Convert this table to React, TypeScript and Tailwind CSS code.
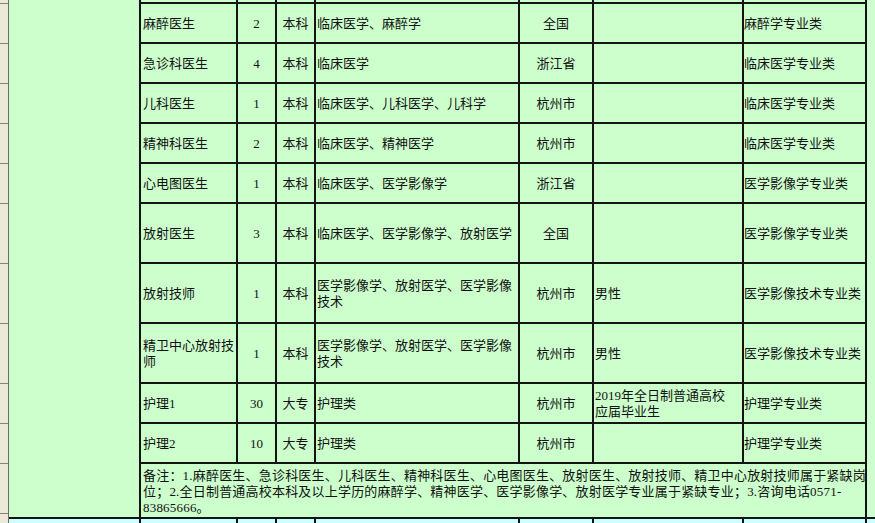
import React from "react";

type Row = {
  name: string[];
  count: string;
  degree: string;
  major: string[];
  region: string;
  other: string[];
  category: string;
};

const data: Row[] = [
  { name: ["麻醉医生"], count: "2", degree: "本科", major: ["临床医学、麻醉学"], region: "全国", other: [], category: "麻醉学专业类" },
  { name: ["急诊科医生"], count: "4", degree: "本科", major: ["临床医学"], region: "浙江省", other: [], category: "临床医学专业类" },
  { name: ["儿科医生"], count: "1", degree: "本科", major: ["临床医学、儿科医学、儿科学"], region: "杭州市", other: [], category: "临床医学专业类" },
  { name: ["精神科医生"], count: "2", degree: "本科", major: ["临床医学、精神医学"], region: "杭州市", other: [], category: "临床医学专业类" },
  { name: ["心电图医生"], count: "1", degree: "本科", major: ["临床医学、医学影像学"], region: "浙江省", other: [], category: "医学影像学专业类" },
  { name: ["放射医生"], count: "3", degree: "本科", major: ["临床医学、医学影像学、放射医学"], region: "全国", other: [], category: "医学影像学专业类" },
  { name: ["放射技师"], count: "1", degree: "本科", major: ["医学影像学、放射医学、医学影像", "技术"], region: "杭州市", other: ["男性"], category: "医学影像技术专业类" },
  { name: ["精卫中心放射技", "师"], count: "1", degree: "本科", major: ["医学影像学、放射医学、医学影像", "技术"], region: "杭州市", other: ["男性"], category: "医学影像技术专业类" },
  { name: ["护理1"], count: "30", degree: "大专", major: ["护理类"], region: "杭州市", other: ["2019年全日制普通高校", "应届毕业生"], category: "护理学专业类" },
  { name: ["护理2"], count: "10", degree: "大专", major: ["护理类"], region: "杭州市", other: [], category: "护理学专业类" },
];

function Lines({ lines }: { lines: string[] }) {
  return (
    <div className="flex flex-col">
      {lines.map((l, i) => (
        <span key={i} className="whitespace-nowrap">
          {l}
        </span>
      ))}
    </div>
  );
}

const G = "bg-[#ccffcc]";
const C = "bg-[#ccffff]";

export default function App() {
  const tickHeights = ["h-[4px]", "h-[40px]", "h-[40px]", "h-[40px]", "h-[40px]", "h-[40px]", "h-[60px]", "h-[60px]", "h-[60px]", "h-[40px]", "h-[40px]", "h-[50px]"];
  return (
    <div className="flex h-[523px] w-[875px] overflow-hidden bg-[#ccffcc] font-['Liberation_Serif','Noto_Sans_CJK_SC',serif] text-[13px] leading-[16px] text-[#111]">
      <div className="flex h-full w-[9px] shrink-0 flex-col border-r border-[#6f6e62] bg-[#ece9d8]">
        {tickHeights.map((h, i) => (
          <div key={i} className={`${h} shrink-0 border-b border-[#85847a]`} />
        ))}
      </div>
      <div className="grid h-full flex-1 grid-cols-[130px_95px_37px_37px_202px_72px_148px_121px_1fr] grid-rows-[2px_38px_38px_38px_38px_38px_58px_58px_58px_38px_38px_53px_1fr] gap-[2px] bg-[#141414]">
        <div className={`col-start-1 row-start-1 row-span-12 ${G}`} />
        <div className={`col-start-9 row-start-1 row-span-12 bg-[#d0fdd0]`} />
        {Array.from({ length: 7 }).map((_, i) => (
          <div key={`top${i}`} className={G} />
        ))}
        {data.map((r, i) => (
          <React.Fragment key={i}>
            <div className={`${G} flex items-center pl-[2px] pt-[2px]`}>
              <Lines lines={r.name} />
            </div>
            <div className={`${G} flex items-center justify-center pt-[2px]`}>{r.count}</div>
            <div className={`${G} flex items-center justify-center pt-[2px]`}>{r.degree}</div>
            <div className={`${G} flex items-center pl-[1px] pt-[2px]`}>
              <Lines lines={r.major} />
            </div>
            <div className={`${G} flex items-center justify-center pt-[2px]`}>{r.region}</div>
            <div className={`${G} flex items-center pl-[1px] pt-[2px]`}>
              <Lines lines={r.other} />
            </div>
            <div className={`${G} flex items-center pt-[2px]`}>{r.category}</div>
          </React.Fragment>
        ))}
        <div className={`col-span-7 ${G} pl-[2px] pt-[4px] tracking-[0.2px]`}>
          <div className="whitespace-nowrap">备注：1.麻醉医生、急诊科医生、儿科医生、精神科医生、心电图医生、放射医生、放射技师、精卫中心放射技师属于紧缺岗</div>
          <div className="whitespace-nowrap">位；2.全日制普通高校本科及以上学历的麻醉学、精神医学、医学影像学、放射医学专业属于紧缺专业；3.咨询电话0571-</div>
          <div className="whitespace-nowrap">83865666。</div>
        </div>
        {Array.from({ length: 9 }).map((_, i) => (
          <div key={`bot${i}`} className={C} />
        ))}
      </div>
    </div>
  );
}
